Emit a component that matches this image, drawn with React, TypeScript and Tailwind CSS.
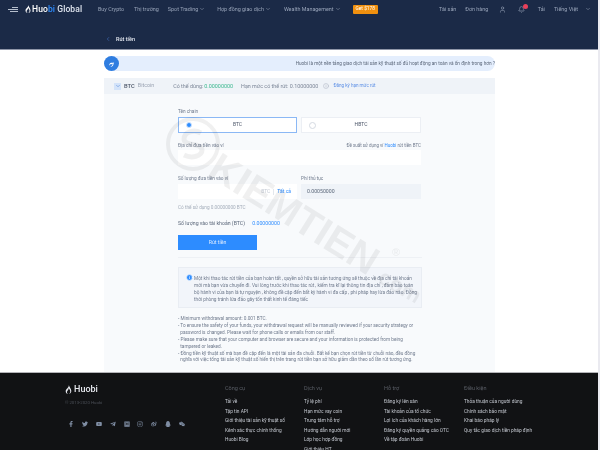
import { ChevronDown, ChevronLeft, Info, User, Bell } from "lucide-react";
import {
  FaFacebookF,
  FaTwitter,
  FaYoutube,
  FaTelegramPlane,
  FaMedium,
  FaInstagram,
  FaWeibo,
  FaQq,
  FaWeixin,
} from "react-icons/fa";

const notice = [
  "Một khi thao tác rút tiền của bạn hoàn tất , quyền sở hữu tài sản tương ứng sẽ thuộc về địa chỉ tài khoản",
  "mới mà bạn vừa chuyển đi. Vui lòng trước khi thao tác rút , kiểm tra kĩ lại thông tin địa chỉ , đảm bảo toàn",
  "bộ hành vi của bạn là tự nguyện , không đề cập đến bất kỳ hành vi đa cấp , phi pháp hay lừa đảo nào. Đồng",
  "thời phòng tránh lừa đảo gây tổn thất kinh tế đáng tiếc",
];

const rules = [
  "- Minimum withdrawal amount: 0.001 BTC.",
  "- To ensure the safety of your funds, your withdrawal request will be manually reviewed if your security strategy or",
  "  password is changed. Please wait for phone calls or emails from our staff.",
  "- Please make sure that your computer and browser are secure and your information is protected from being",
  "  tampered or leaked.",
  "- Đồng tiền kỹ thuật số mà bạn đề cập đến là một tài sản đa chuỗi. Bất kể bạn chọn rút tiền từ chuỗi nào, đều đồng",
  "  nghĩa với việc tổng tài sản kỹ thuật số hiển thị trên trang rút tiền bạn sở hữu giảm dần theo số lần rút tương ứng.",
];

const footerCols = [
  { title: "Công cụ", width: "w-[79px]", items: ["Tải về", "Tập tin API", "Giới thiệu tài sản kỹ thuật số", "Kênh xác thực chính thống", "Huobi Blog"] },
  { title: "Dịch vụ", width: "w-[80px]", items: ["Tỷ lệ phí", "Hạn mức vay coin", "Trung tâm hỗ trợ", "Hướng dẫn người mới", "Lớp học hợp đồng", "Giới thiệu HT"] },
  { title: "Hỗ trợ", width: "w-[80px]", items: ["Đăng ký lên sàn", "Tài khoản của tổ chức", "Lợi ích của khách hàng lớn", "Đăng ký quyền quảng cáo OTC", "Về tập đoàn Huobi"] },
  { title: "Điều kiện", width: "w-[90px]", items: ["Thỏa thuận của người dùng", "Chính sách bảo mật", "Khai báo pháp lý", "Quy tắc giao dịch tiền pháp định"] },
];

const socials = [FaFacebookF, FaTwitter, FaYoutube, FaTelegramPlane, FaMedium, FaInstagram, FaWeibo, FaQq, FaWeixin];

function Flame({ className }: { className: string }) {
  return (
    <svg viewBox="0 0 12 16" className={className} fill="currentColor">
      <path d="M6.5 0c.4 2.6-1 4-2.400 5.600C2.800 7 1 8.600 1 11c0 2.700 2 4.700 4.300 5-1.400-.8-2.100-2-2.100-3.300 0-2 1.700-3 2.600-4.900.3-.6.400-1.300.300-2 1.600 1.500 3 3.600 3 5.900 0 1.800-.900 3.400-2.400 4.300C9.200 15.500 11 13.500 11 10.800 11 6.500 7.600 4 6.500 0z" />
    </svg>
  );
}

function Label({ children }: { children: React.ReactNode }) {
  return <div className="text-[4.700px] leading-[7px] text-[#6f7a8d]">{children}</div>;
}

export default function App() {
  return (
    <div className="relative flex h-[450px] w-[600px] flex-col overflow-hidden bg-[#eaeaf0] pr-[2px] font-['Roboto',sans-serif] blur-[0.3px]">
      <header className="h-[50px] shrink-0 border-b border-[#8f96a8] bg-[#1b2a47]">
        <div className="flex h-[18px] items-center text-[5.400px] text-[#98a4b9]">
          <div className="ml-[8px] flex w-[10px] flex-col items-end gap-[1px]">
            <span className="h-[1px] w-[6px] bg-[#b6bfcd]" />
            <span className="h-[1px] w-[10px] bg-[#b6bfcd]" />
            <span className="h-[1px] w-[8px] bg-[#b6bfcd]" />
          </div>
          <Flame className="ml-[7px] h-[8px] w-[6px] text-white" />
          <span className="ml-[1px] w-[50px] whitespace-nowrap text-[8.500px] font-medium tracking-[0.1px] text-white">
            Huo<span className="text-[#2d8cff]">bi</span> <span className="text-[#dfe5ef]">Global</span>
          </span>
          <span className="ml-[16px]">Buy Crypto</span>
          <span className="ml-[10px]">Thị trường</span>
          <span className="ml-[9px] flex items-center gap-[1px]">Spot Trading <ChevronDown size={6} /></span>
          <span className="ml-[12px] flex items-center gap-[1px]">Hợp đồng giao dịch <ChevronDown size={6} /></span>
          <span className="ml-[13px] flex items-center gap-[1px]">Wealth Management <ChevronDown size={6} /></span>
          <span className="ml-[12px] rounded-[1px] bg-[#f0900f] px-[3px] py-[1.500px] text-[4.800px] leading-[6px] text-white">Get $178</span>
          <span className="ml-auto">Tài sản</span>
          <span className="ml-[9px]">Đơn hàng</span>
          <User size={7} className="ml-[10.500px]" />
          <span className="relative ml-[12px]">
            <Bell size={7} />
            <span className="absolute -right-[3px] -top-[2px] h-[5px] w-[5px] rounded-full bg-[#e8405a]" />
          </span>
          <span className="ml-[13px]">Tải</span>
          <span className="ml-[9px]">Tiếng Việt</span>
          <ChevronDown size={6} className="ml-[7px] mr-[7px]" />
        </div>
        <div className="mt-[14px] flex items-center pl-[105px] text-[5.500px] font-medium leading-[14px] text-[#e6eaf2]">
          <ChevronLeft size={6} className="text-[#4a7fd6]" />
          <span className="ml-[5px]">Rút tiền</span>
        </div>
      </header>

      <main className="h-[322px] shrink-0 overflow-hidden bg-white pl-[104px] pt-[6px]">
        <div className="relative flex h-[15px] w-[391px] items-center justify-end rounded-full bg-[#e4eefd] text-[4.730px] text-[#5a6679]">
          <span className="absolute left-0 top-0 flex h-[15px] w-[15px] items-center justify-center rounded-full bg-[#2f7de0]">
            <Flame className="h-[6px] w-[6px] rotate-45 text-white" />
          </span>
          Huobi là một nền tảng giao dịch tài sản kỹ thuật số đủ hoạt động an toàn và ổn định trong hơn ?
        </div>

        <section className="mt-[7px] h-[300px] w-[391px] bg-[#f8fafc]">
          <div className="flex h-[16px] items-center bg-[#eff3f8] pl-[10px] text-[5.400px] text-[#7d8798]">
            <span className="flex h-[7px] w-[7px] items-center justify-center bg-[#d3e3f9] text-[#4a7fd6]"><ChevronDown size={6} /></span>
            <span className="ml-[3px] text-[5.800px] font-medium text-[#4b5568]">BTC</span>
            <span className="ml-[3px] text-[5.300px] text-[#9aa3b2]">Bitcoin</span>
            <span className="ml-[19px]">Có thể dùng:</span>
            <span className="ml-[1px] text-[#3bb88f]">0.00000000</span>
            <span className="ml-[8px]">Hạn mức có thể rút: 0.10000000</span>
            <Info size={6} className="ml-[5px] text-[#aab2c0]" />
            <span className="ml-[4px] text-[4.600px] text-[#5c8fe6]">Đăng ký hạn mức rút</span>
          </div>

          <div className="ml-[74px] w-[243px] pt-[14px]">
            <Label>Tên chain</Label>
            <div className="mt-[2px] flex gap-[4px]">
              <div className="relative flex h-[16px] w-[119px] items-center justify-center border border-[#8bb8f5] bg-white text-[5px] text-[#4b5568]">
                <span className="absolute left-[7px] h-[6px] w-[6px] rounded-full border-[1.500px] border-[#cfe2fb] bg-[#2d8cff]" />
                BTC
              </div>
              <div className="relative flex h-[16px] w-[120px] items-center justify-center border border-[#eceff4] bg-white text-[5px] text-[#4b5568]">
                <span className="absolute left-[7px] h-[7px] w-[7px] rounded-full border border-[#d5dae2]" />
                HBTC
              </div>
            </div>

            <div className="mt-[9px] flex justify-between">
              <Label>Địa chỉ đưa tiền vào ví</Label>
              <div className="text-[4.500px] leading-[7px] text-[#6f7a8d]">Đề xuất sử dụng ví <span className="text-[#2d8cff]">Huobi</span> rút tiền BTC</div>
            </div>
            <div className="mt-[1px] h-[15px] bg-white" />

            <div className="mt-[10px] flex gap-[4px]">
              <div className="w-[119px]">
                <Label>Số lượng đưa tiền vào ví</Label>
                <div className="mt-[2px] flex h-[15px] items-center justify-end bg-white pr-[6px] text-[5px]">
                  <span className="text-[#c3c9d3]">BTC</span>
                  <span className="mx-[3px] h-[6px] w-px bg-[#e3e7ed]" />
                  <span className="text-[#2d8cff]">Tất cả</span>
                </div>
              </div>
              <div className="w-[120px]">
                <Label>Phí thủ tục</Label>
                <div className="mt-[2px] flex h-[15px] items-center bg-[#eff3f8] pl-[6px] text-[5.200px] text-[#5a6679]">0.00050000</div>
              </div>
            </div>

            <div className="mt-[5px] text-[4.700px] leading-[7px] text-[#a4adba]">Có thể sử dụng 0.00000000 BTC</div>

            <div className="mt-[9px] text-[5.200px] leading-[7px] text-[#5a6679]">
              Số lượng vào tài khoản (BTC) <span className="ml-[6px] text-[#2d8cff]">0.00000000</span>
            </div>

            <button className="mt-[8px] block h-[15px] w-[79px] bg-[#2d8cff] text-[5.200px] text-[#dcebff]">Rút tiền</button>

            <div className="mt-[7px] h-px w-[244px] bg-[#eef1f5]" />

            <div className="mt-[9px] flex h-[41px] w-[244px] border border-[#e9edf3] bg-[#f2f5fa] pl-[7px] pt-[7px] text-[4.750px] leading-[7px] text-[#6f7a8d]">
              <Info size={7} className="mt-[-1px] shrink-0 fill-[#2d8cff] text-white" />
              <div className="ml-[1px] whitespace-nowrap">
                {notice.map((line) => (
                  <div key={line}>{line}</div>
                ))}
              </div>
            </div>

            <div className="mt-[8px] whitespace-pre text-[4.720px] leading-[6.900px] text-[#6f7a8d]">
              {rules.map((line) => (
                <div key={line}>{line}</div>
              ))}
            </div>
          </div>
        </section>
      </main>

      <footer className="flex h-[78px] shrink-0 border-t border-[#b4b4b8] bg-[#111214] text-[4.800px] text-[#c3c7cf]">
        <div className="ml-[65px] w-[160px] pt-[11px]">
          <div className="flex items-center text-[9px] font-medium leading-[11px] text-[#e6e8ee]">
            <Flame className="mr-[2px] h-[9px] w-[7px]" /> Huobi
          </div>
          <div className="mt-[5px] text-[4.300px] text-[#4c5058]">© 2013-2020 Huobi</div>
          <div className="ml-[3px] mt-[15px] flex gap-[7.900px] text-[#7f8da3]">
            {socials.map((Icon, i) => (
              <Icon key={i} size={6} />
            ))}
          </div>
        </div>
        {footerCols.map((col) => (
          <div key={col.title} className={col.width + " pt-[12px] whitespace-nowrap"}>
            <div className="text-[5.500px] leading-[7px] text-[#5a5e66]">{col.title}</div>
            <div className="mt-[5px] flex flex-col leading-[9.500px]">
              {col.items.map((item) => (
                <span key={item}>{item}</span>
              ))}
            </div>
          </div>
        ))}
      </footer>

      {/* watermark */}
      <div className="pointer-events-none absolute inset-0 font-['Liberation_Sans',sans-serif] font-bold text-black/[0.06]">
        <svg viewBox="0 0 56 56" fill="none" stroke="currentColor" className="absolute left-[165px] top-[116px] h-[56px] w-[56px]">
          <circle cx="28" cy="28" r="25" strokeWidth="4" />
          <path d="M36 17c-7-4-17-1-17 6 0 8 18 3 18 11 0 6-10 9-18 5" strokeWidth="5" />
        </svg>
        <span className="absolute left-[224px] top-[146px] origin-top-left rotate-[32deg] whitespace-nowrap text-[40px] leading-[40px]">KIEMTIEN</span>
        <span className="absolute left-[392px] top-[246px] text-[11px] leading-[12px]">®</span>
        <span className="absolute left-[381px] top-[262px] origin-top-left rotate-[30deg] whitespace-nowrap text-[22px] leading-[24px]">.com</span>
      </div>
    </div>
  );
}
